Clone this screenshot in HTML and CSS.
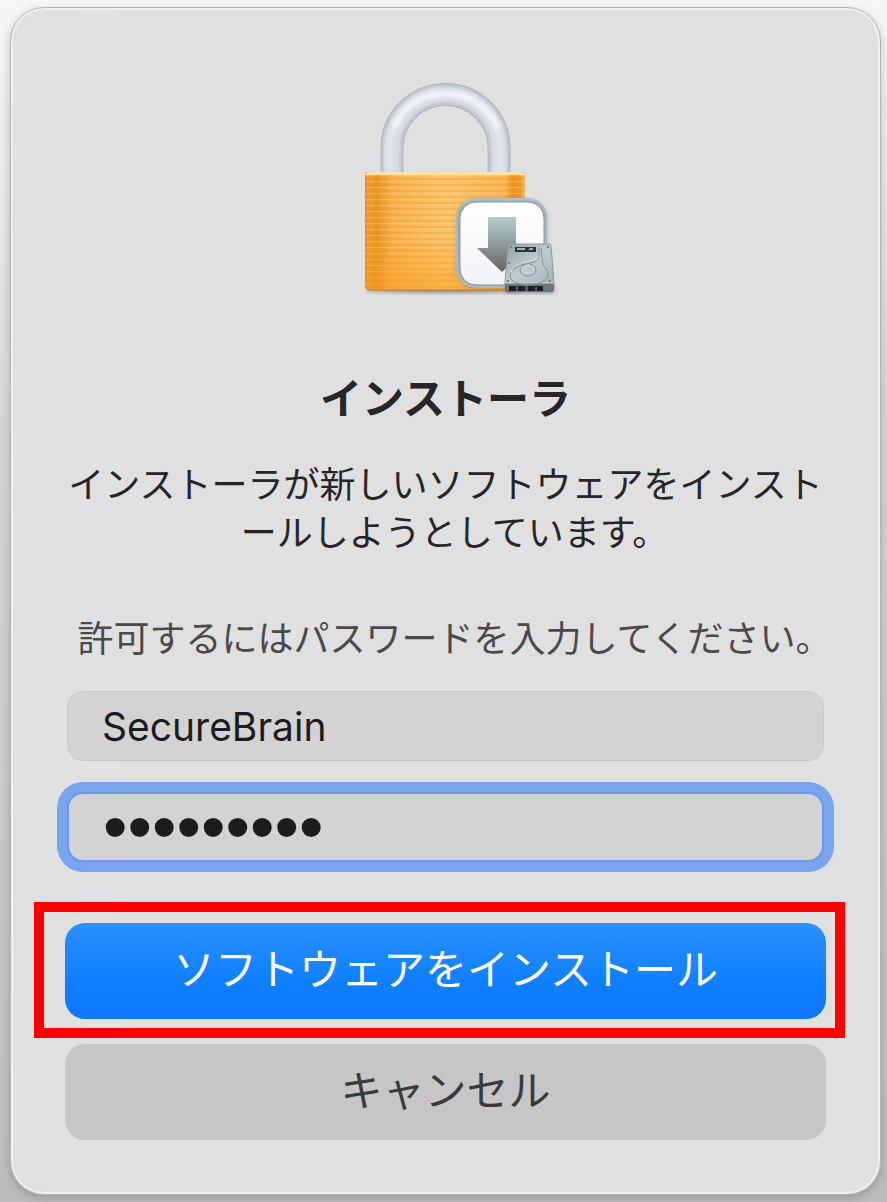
FILE: index.html
```html
<!DOCTYPE html>
<html lang="ja">
<head>
    <meta charset="UTF-8">
    <meta name="viewport" content="width=device-width, initial-scale=1">
    <title>インストーラ</title>
    <link rel="stylesheet" href="styles.css">
</head>
<body>
    <form class="dialog">
        <svg class="lock-icon" viewBox="0 0 224 228" aria-hidden="true">
            <defs>
                <linearGradient id="bodyFill" x1="0" x2="1" y1="0" y2="0">
                    <stop offset="0" stop-color="#e8921c"/>
                    <stop offset="0.03" stop-color="#f0a032"/>
                    <stop offset="0.07" stop-color="#e99522"/>
                    <stop offset="0.17" stop-color="#f9b14c"/>
                    <stop offset="0.5" stop-color="#ffc46c"/>
                    <stop offset="0.88" stop-color="#fbb44e"/>
                    <stop offset="0.92" stop-color="#ea9522"/>
                    <stop offset="0.97" stop-color="#ed9a28"/>
                    <stop offset="1" stop-color="#f8bd63"/>
                </linearGradient>
                <linearGradient id="bodyShade" x1="0" x2="0" y1="0" y2="1">
                    <stop offset="0.5" stop-color="#f59a1c" stop-opacity="0"/>
                    <stop offset="1" stop-color="#f59a1c" stop-opacity="0.5"/>
                </linearGradient>
                <pattern id="brushed" width="160" height="6" patternUnits="userSpaceOnUse">
                    <rect width="160" height="2" fill="#e08f1c" opacity="0.22"/>
                    <rect y="3" width="160" height="1" fill="#ffe0a0" opacity="0.3"/>
                </pattern>
                <linearGradient id="arrowFill" x1="0" x2="0" y1="0" y2="1">
                    <stop offset="0" stop-color="#b4cbd2"/>
                    <stop offset="0.5" stop-color="#8e9a9c"/>
                    <stop offset="1" stop-color="#646464"/>
                </linearGradient>
                <linearGradient id="badgeEdge" x1="0" x2="0" y1="0" y2="1">
                    <stop offset="0" stop-color="#a9bcc2"/>
                    <stop offset="0.15" stop-color="#98a8ad"/>
                    <stop offset="1" stop-color="#a3b0b4"/>
                </linearGradient>
                <linearGradient id="badgeFill" x1="0" x2="0" y1="0" y2="1">
                    <stop offset="0" stop-color="#ffffff"/>
                    <stop offset="1" stop-color="#f1f2f6"/>
                </linearGradient>
                <linearGradient id="diskFill" x1="0" x2="1" y1="0" y2="1">
                    <stop offset="0" stop-color="#93a1a8"/>
                    <stop offset="0.5" stop-color="#bfcdd3"/>
                    <stop offset="1" stop-color="#a3b3b9"/>
                </linearGradient>
                <filter id="soft" x="-20%" y="-20%" width="140%" height="140%">
                    <feGaussianBlur stdDeviation="2"/>
                </filter>
            </defs>

            <!-- shackle -->
            <g fill="none">
                <path d="M58 98V72a53.500 53.500 0 0 1 107 0v26" stroke="#b4b9c4" stroke-width="23"/>
                <path d="M58 98V72a53.500 53.500 0 0 1 107 0v26" stroke="#c6cad3" stroke-width="20"/>
                <path d="M58 98V72a53.500 53.500 0 0 1 107 0v26" stroke="#d6dae2" stroke-width="15"/>
                <path d="M56 98V72a55 55 0 0 1 110 0v26" stroke="#e2e5ec" stroke-width="7" filter="url(#soft)"/>
                <path d="M60 52q15-34 51-34t53 34" stroke="#f4f6fa" stroke-width="5" filter="url(#soft)"/>
            </g>

            <!-- body -->
            <path d="M33 210h156v5q-78 4-156 0z" fill="#555" opacity="0.6" filter="url(#soft)"/>
            <path d="M31 98q0-2 2-2h156q2 0 2 2v112q0 3-4 4H35q-4-1-4-4z" fill="url(#bodyFill)"/>
            <path d="M31 99h160v111q0 3-4 4H35q-4-1-4-4z" fill="url(#brushed)"/>
            <path d="M31 99h160v111q0 3-4 4H35q-4-1-4-4z" fill="url(#bodyShade)"/>
            <path d="M33 96h156l2 3H31z" fill="#ffe1a8"/>
            <path d="M32 211q2 3 5 3h148q3 0 5-3" fill="none" stroke="#cf7c10" stroke-width="1"/>

            <!-- installer badge -->
            <rect x="123" y="124" width="90" height="88" rx="20" fill="#555" opacity="0.4" filter="url(#soft)"/>
            <rect x="122" y="122" width="91" height="90" rx="20" fill="url(#badgeEdge)"/>
            <rect x="123" y="123" width="89" height="88" rx="19" fill="none" stroke="#b4c6cb"/>
            <rect x="126" y="126" width="84" height="83" rx="16" fill="url(#badgeFill)" stroke="#8b979b" stroke-width="1"/>
            <path d="M154 141h28v31h11l-25 24-25-24h11z" fill="url(#arrowFill)"/>

            <!-- hard disk -->
            <path d="M172 209h48v8h-48z" fill="#333" opacity="0.5" filter="url(#soft)"/>
            <path d="M176 168h39q2 0 2 2l3 36v3h-49v-3l3-36q0-2 2-2z" fill="url(#diskFill)" stroke="#8b979c"/>
            <path d="M171 207h49v7q0 2-2 2h-45q-2 0-2-2z" fill="#6c767b"/>
            <path d="M175 210h34v5h-34z" fill="#1d1f22"/>
            <path d="M182 210h2v5h-2zM191 210h3v5h-3zM201 211h2v4h-2z" fill="#555c61"/>
            <path d="M171 207h49" stroke="#c8d3d7"/>
            <path d="M181 171h21v5h-21z" fill="#2e3235"/>
            <path d="M183 172h8v2h-8zM194 174h5v-2h-3z" fill="#a5afb5"/>
            <g fill="none" stroke="#84939a">
                <path d="M205 172v9q-1 5-9 6-20 3-20 14 2 7 18 8 17-1 20-9 1-5-5-11l-2-17"/>
                <path d="M204 180q-2 4-9 5-17 3-18 12" stroke="#d0dbdf"/>
                <ellipse cx="194" cy="194" rx="8" ry="6"/>
                <ellipse cx="194" cy="193" rx="6" ry="4" stroke="#d0dbdf"/>
            </g>
            <g fill="#5e6a70">
                <circle cx="177" cy="171" r="1"/>
                <circle cx="214" cy="171" r="1"/>
                <circle cx="175" cy="187" r="1"/>
                <circle cx="174" cy="205" r="1"/>
                <circle cx="216" cy="205" r="1"/>
            </g>
        </svg>

        <h1 class="title">インストーラ</h1>
        <p class="message">インストーラが新しいソフトウェアをインストールしようとしています。</p>
        <p class="prompt">許可するにはパスワードを入力してください。</p>

        <input class="field" type="text" aria-label="ユーザ名" value="SecureBrain">
        <input class="field field-password" type="password" aria-label="パスワード" value="123456789">

        <div class="highlight">
            <button class="btn btn-primary" type="button">ソフトウェアをインストール</button>
        </div>
        <button class="btn btn-cancel" type="button">キャンセル</button>
    </form>
</body>
</html>
```
FILE: styles.css
```css
* {
    box-sizing: border-box;
}

body {
    margin: 0;
    min-height: 100vh;
    padding: 7px 6px 7px 10px;
    background: linear-gradient(#f6f6f6, #d6d6d6 35%, #c8c8c8 70%, #bcbcbc);
    font-family: Inter, "Noto Sans CJK JP", sans-serif;
    color: #262628;
}

.dialog {
    display: flex;
    flex-direction: column;
    min-height: calc(100vh - 14px);
    padding: 68px 54px 54px;
    border: 1px solid #b4b4b4;
    border-radius: 34px;
    background: linear-gradient(90deg, #e0e0e0 68px, #dfe1e3 68px, #dfe1e3 92px, #e0e0e0 116px);
    box-shadow: inset 0 0 1px 2px #f0f0f0, 0 3px 8px rgba(0, 0, 0, 0.2);
}

.lock-icon {
    align-self: center;
    width: 224px;
    height: 228px;
}

.title {
    margin: 67px 0 0;
    font-size: 42px;
    line-height: 56px;
    font-weight: bold;
    text-align: center;
}

/* half-width punctuation keeps the last line centred */
.message,
.prompt {
    margin: 34px 0 0;
    font-size: 36px;
    line-height: 48px;
    text-align: center;
    word-break: break-all;
    line-break: anywhere;
    font-feature-settings: "halt";
}

.prompt {
    margin-top: 58px;
    color: #4a4a4a;
}

.field {
    height: 70px;
    margin: 28px 2px 0;
    padding: 0 34px;
    border: 1px solid #c8c8c8;
    border-radius: 16px;
    outline: none;
    background: #d3d3d3;
    color: #1c1c1e;
    font-family: inherit;
    font-size: 39px;
}

.field-password {
    margin-top: 31px;
    border: 2px solid #6a9ae8;
    box-shadow: 0 0 0 10px #79a5ee;
    font-family: "Liberation Sans", sans-serif;
    font-size: 70px;
}

/* red frame around the install button */
.highlight {
    display: flex;
    margin: 40px -19px 0 -31px;
    padding: 11px 9px 9px 21px;
    border: 10px solid #ff0000;
}

.btn {
    width: 100%;
    height: 96px;
    padding: 0 0 10px;
    border: none;
    border-radius: 20px;
    font-family: inherit;
    font-size: 42px;
    cursor: pointer;
}

.btn-primary {
    background: linear-gradient(#2a91ff, #0f80ff 60%, #1277ff);
    color: #fff;
}

.btn-cancel {
    margin-top: 6px;
    background: #c6c6c6;
    color: #3a3a3a;
}
```
